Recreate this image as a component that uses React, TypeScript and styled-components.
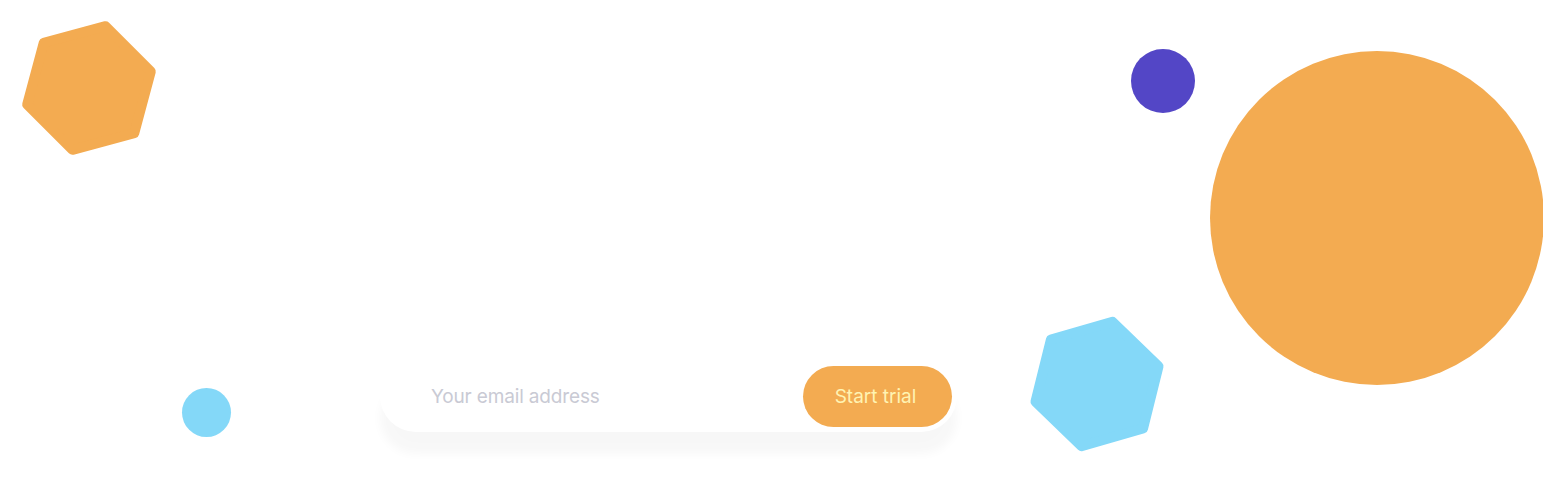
import React from "react";
import styled, { createGlobalStyle } from "styled-components";

const GlobalStyle = createGlobalStyle`
  html, body { margin: 0; padding: 0; background: #ffffff; }
  body { font-family: Inter, "Open Sans", sans-serif; overflow: hidden; }
  * { box-sizing: border-box; }
`;

const Hero = styled.section`
  position: relative;
  width: 1543px;
  height: 486px;
  overflow: hidden;
  background: #ffffff;
`;

const Decorations = styled.div`
  position: absolute;
  inset: 0;
  pointer-events: none;
`;

const Content = styled.div`
  position: relative;
  z-index: 1;
  display: flex;
  flex-direction: column;
  padding: 360px 0 0 380px;
`;

const Form = styled.form`
  display: flex;
  align-items: center;
  justify-content: space-between;
  width: 577px;
  height: 72px;
  padding: 5px 5px 5px 51px;
  background: #ffffff;
  border-radius: 36px;
  box-shadow: 0 22px 10px 0 rgba(0, 0, 0, 0.03);
`;

const EmailInput = styled.input`
  flex: 1;
  border: none;
  outline: none;
  background: transparent;
  font-family: Inter, "Open Sans", sans-serif;
  font-size: 19px;
  color: #3a3b4a;
  letter-spacing: -0.15px;
  padding: 0;
  &::placeholder { color: #c9cad4; }
`;

const TrialButton = styled.button`
  width: 149px;
  height: 61px;
  border: none;
  border-radius: 31px;
  background: #f3ab51;
  color: #fff3b2;
  font-family: Inter, "Open Sans", sans-serif;
  font-size: 19px;
  cursor: pointer;
  padding: 0 0 0 -2px;
  text-indent: -4px;
`;

const Shape = styled.svg<{ $x: number; $y: number; $w: number; $h: number }>`
  position: absolute;
  left: ${(p) => p.$x}px;
  top: ${(p) => p.$y}px;
  width: ${(p) => p.$w}px;
  height: ${(p) => p.$h}px;
  overflow: visible;
`;

function hexPoints(r: number, startDeg: number, c: number) {
  const pts: string[] = [];
  for (let i = 0; i < 6; i++) {
    const a = ((startDeg + i * 60) * Math.PI) / 180;
    pts.push(`${(c + r * Math.cos(a)).toFixed(2)},${(c + r * Math.sin(a)).toFixed(2)}`);
  }
  return pts.join(" ");
}

const Hexagon: React.FC<{ cx: number; cy: number; r: number; start: number; color: string }> = ({
  cx,
  cy,
  r,
  start,
  color,
}) => {
  const size = r * 2;
  const stroke = 10;
  return (
    <Shape $x={cx - r} $y={cy - r} $w={size} $h={size} viewBox={`0 0 ${size} ${size}`}>
      <polygon
        points={hexPoints(r - stroke / 2, start, r)}
        fill={color}
        stroke={color}
        strokeWidth={stroke}
        strokeLinejoin="round"
      />
    </Shape>
  );
};

const Circle: React.FC<{ cx: number; cy: number; d: number; color: string }> = ({ cx, cy, d, color }) => (
  <Shape $x={cx - d / 2} $y={cy - d / 2} $w={d} $h={d} viewBox={`0 0 ${d} ${d}`}>
    <circle cx={d / 2} cy={d / 2} r={d / 2} fill={color} />
  </Shape>
);

export default function App() {
  return (
    <>
      <GlobalStyle />
      <Hero>
        <Decorations aria-hidden="true">
          <Hexagon cx={88.8} cy={87.8} r={69} start={-75} color="#f3ab51" />
          <Hexagon cx={1097.3} cy={383.7} r={69} start={-76} color="#84d8f8" />
          <Circle cx={1162.5} cy={80.5} d={64} color="#5346c6" />
          <Circle cx={206.5} cy={412} d={49} color="#84d8f8" />
          <Circle cx={1376.5} cy={218} d={334} color="#f3ab51" />
        </Decorations>
        <Content>
          <Form onSubmit={(e) => e.preventDefault()}>
            <EmailInput type="email" placeholder="Your email address" />
            <TrialButton type="submit">Start trial</TrialButton>
          </Form>
        </Content>
      </Hero>
    </>
  );
}
